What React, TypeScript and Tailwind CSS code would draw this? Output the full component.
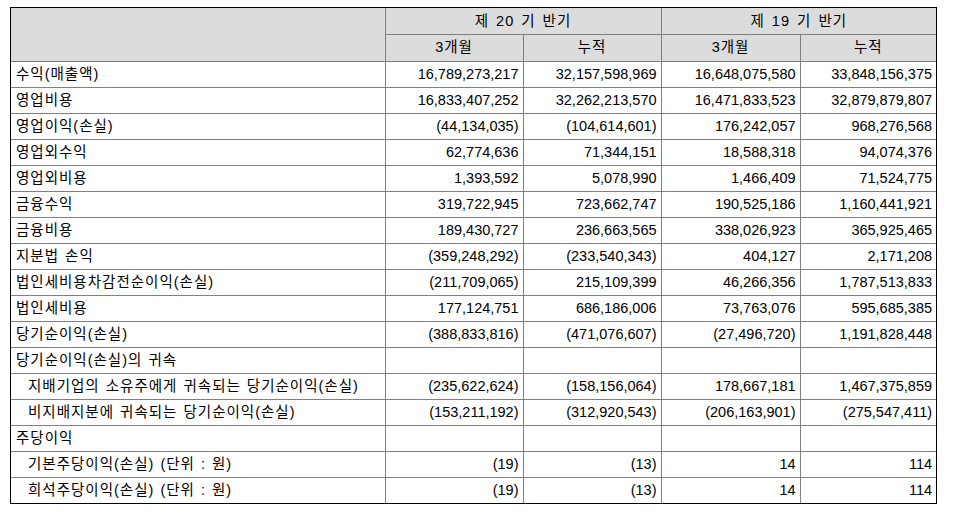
const rows: { label: string; indent?: boolean; v: string[] }[] = [
  { label: "수익(매출액)", v: ["16,789,273,217", "32,157,598,969", "16,648,075,580", "33,848,156,375"] },
  { label: "영업비용", v: ["16,833,407,252", "32,262,213,570", "16,471,833,523", "32,879,879,807"] },
  { label: "영업이익(손실)", v: ["(44,134,035)", "(104,614,601)", "176,242,057", "968,276,568"] },
  { label: "영업외수익", v: ["62,774,636", "71,344,151", "18,588,318", "94,074,376"] },
  { label: "영업외비용", v: ["1,393,592", "5,078,990", "1,466,409", "71,524,775"] },
  { label: "금융수익", v: ["319,722,945", "723,662,747", "190,525,186", "1,160,441,921"] },
  { label: "금융비용", v: ["189,430,727", "236,663,565", "338,026,923", "365,925,465"] },
  { label: "지분법 손익", v: ["(359,248,292)", "(233,540,343)", "404,127", "2,171,208"] },
  { label: "법인세비용차감전순이익(손실)", v: ["(211,709,065)", "215,109,399", "46,266,356", "1,787,513,833"] },
  { label: "법인세비용", v: ["177,124,751", "686,186,006", "73,763,076", "595,685,385"] },
  { label: "당기순이익(손실)", v: ["(388,833,816)", "(471,076,607)", "(27,496,720)", "1,191,828,448"] },
  { label: "당기순이익(손실)의 귀속", v: ["", "", "", ""] },
  { label: "지배기업의 소유주에게 귀속되는 당기순이익(손실)", indent: true, v: ["(235,622,624)", "(158,156,064)", "178,667,181", "1,467,375,859"] },
  { label: "비지배지분에 귀속되는 당기순이익(손실)", indent: true, v: ["(153,211,192)", "(312,920,543)", "(206,163,901)", "(275,547,411)"] },
  { label: "주당이익", v: ["", "", "", ""] },
  { label: "기본주당이익(손실) (단위 : 원)", indent: true, v: ["(19)", "(13)", "14", "114"] },
  { label: "희석주당이익(손실) (단위 : 원)", indent: true, v: ["(19)", "(13)", "14", "114"] },
];

const cell = "border border-[#808080] p-0";

export default function App() {
  return (
    <div className="min-h-[520px] bg-white pl-[10px] pt-[7px] text-[14.5px] leading-none text-black [font-family:'Liberation_Sans','Noto_Sans_CJK_KR',sans-serif]">
      <div className="w-[927px] border border-black">
        <table className="w-[925px] table-fixed border-collapse border-hidden">
          <colgroup>
            <col className="w-[374px]" />
            <col className="w-[138px]" />
            <col className="w-[138px]" />
            <col className="w-[139px]" />
            <col className="w-[136px]" />
          </colgroup>
          <thead className="bg-[#dcdcdc]">
            <tr className="h-[26px]">
              <th rowSpan={2} className={cell} />
              <th colSpan={2} className={`${cell} text-center font-normal tracking-[1px] [word-spacing:2px]`}>제 20 기 반기</th>
              <th colSpan={2} className={`${cell} text-center font-normal tracking-[1px] [word-spacing:2px]`}>제 19 기 반기</th>
            </tr>
            <tr className="h-[27px]">
              <th className={`${cell} text-center font-normal tracking-[1px]`}>3개월</th>
              <th className={`${cell} text-center font-normal tracking-[1px]`}>누적</th>
              <th className={`${cell} text-center font-normal tracking-[1px]`}>3개월</th>
              <th className={`${cell} text-center font-normal tracking-[1px]`}>누적</th>
            </tr>
          </thead>
          <tbody>
            {rows.map((r, i) => (
              <tr key={i} className="h-[26px]">
                <td className={`${cell} whitespace-nowrap tracking-[1px] [word-spacing:1px] ${r.indent ? "pl-[17px]" : "pl-[5px]"}`}>{r.label}</td>
                {r.v.map((n, j) => (
                  <td key={j} className={`${cell} pr-[4px] text-right tabular-nums`}>
                    {n}
                  </td>
                ))}
              </tr>
            ))}
          </tbody>
        </table>
      </div>
    </div>
  );
}
